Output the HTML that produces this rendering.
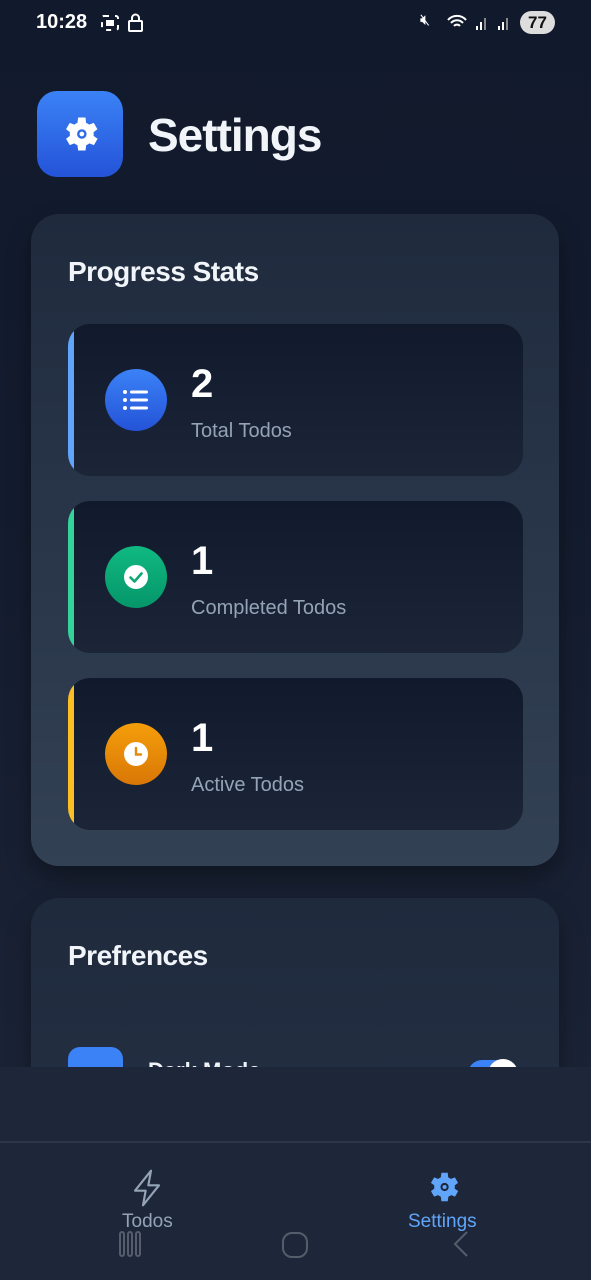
<!DOCTYPE html>
<html><head><style>
*{margin:0;padding:0;box-sizing:border-box}
body{width:591px;height:1280px;overflow:hidden;background:#111a2c;font-family:"Liberation Sans",sans-serif;position:relative;color:#f1f5f9}
.abs{position:absolute}
.clip{position:absolute;left:0;top:0;width:591px;height:1067px;overflow:hidden;background:linear-gradient(#111a2c 0,#131c2e 500px,#1a2335 1067px)}
.card{position:absolute;left:31px;width:528px;border-radius:28px;background:linear-gradient(#1f2a3d,#334155);box-shadow:0 12px 24px rgba(0,0,0,.35)}
.stat{position:absolute;left:68px;width:455px;height:152px;border-radius:22px;background:linear-gradient(#111a2c,#1c2538);overflow:hidden}
.stat .bar{position:absolute;left:0;top:0;bottom:0;width:6px}
.circ{position:absolute;left:37px;top:45px;width:62px;height:62px;border-radius:50%}
.num{position:absolute;left:123px;top:38px;font-size:40px;font-weight:bold;color:#fff}
.lab{position:absolute;left:123px;top:96px;font-size:20px;color:#94a3b8}
</style></head><body>
<div class="clip">
<div class="abs" style="left:36px;top:11px;font-size:20px;font-weight:bold;color:#fff">10:28</div>
<svg class="abs" style="left:100px;top:13px" width="46" height="20"><rect x="2" y="3" width="16" height="14" rx="2" fill="none" stroke="#fff" stroke-width="2" stroke-dasharray="5 6"/><rect x="6" y="7" width="8" height="6" fill="#fff"/><rect x="29" y="8" width="13" height="10" rx="1" fill="none" stroke="#fff" stroke-width="2"/><path d="M32 8V5a3.5 3.5 0 0 1 7 0v3" fill="none" stroke="#fff" stroke-width="2"/></svg>
<div class="abs" style="left:420px;top:12px;font-size:16px;color:#fff">🔇︎</div>
<svg class="abs" style="left:446px;top:12px" width="70" height="20"><path d="M2 8a12 12 0 0 1 18 0M5 11a8 8 0 0 1 12 0M8 14a4 4 0 0 1 6 0" stroke="#fff" stroke-width="2" fill="none"/><rect x="30" y="14" width="2" height="4" fill="#fff"/><rect x="34" y="10" width="2" height="8" fill="#fff"/><rect x="38" y="6" width="2" height="12" fill="#888"/><rect x="52" y="14" width="2" height="4" fill="#fff"/><rect x="56" y="10" width="2" height="8" fill="#fff"/><rect x="60" y="6" width="2" height="12" fill="#888"/></svg>
<div class="abs" style="left:520px;top:11px;width:35px;height:23px;border-radius:12px;background:#ddd;color:#111;font-weight:bold;font-size:17px;text-align:center;line-height:23px">77</div>

<div class="abs" style="left:37px;top:91px;width:86px;height:86px;border-radius:20px;background:linear-gradient(#3b82f6,#2453d8)"></div>
<svg class="abs" style="left:58px;top:112px" width="44" height="44" viewBox="0 0 24 24"><path fill="#fff" d="M19.4 13a7.5 7.5 0 0 0 0-2l2.1-1.6-2-3.5-2.5 1a7 7 0 0 0-1.7-1L15 3h-4l-.4 2.9a7 7 0 0 0-1.7 1l-2.5-1-2 3.5L6.5 11a7.5 7.5 0 0 0 0 2l-2.1 1.6 2 3.5 2.5-1a7 7 0 0 0 1.7 1L11 21h4l.4-2.9a7 7 0 0 0 1.7-1l2.5 1 2-3.5z"/><circle cx="13" cy="12" r="2.6" fill="#2f6ae8"/><circle cx="13" cy="12" r="1.3" fill="#fff"/></svg>
<div class="abs" style="left:148px;top:108px;font-size:46px;font-weight:bold;color:#f1f5f9;letter-spacing:-1px">Settings</div>

<div class="card" style="top:214px;height:652px"></div>
<div class="abs" style="left:68px;top:256px;font-size:28px;font-weight:bold;letter-spacing:-.5px">Progress Stats</div>

<div class="stat" style="top:324px"><div class="bar" style="background:#60a5fa"></div>
<div class="circ" style="background:linear-gradient(#3b82f6,#2453d8)"></div>
<svg class="abs" style="left:53px;top:63px" width="30" height="26"><g fill="#fff"><circle cx="4" cy="5" r="2"/><circle cx="4" cy="13" r="2"/><circle cx="4" cy="21" r="2"/><rect x="9" y="3.5" width="18" height="3" rx="1.5"/><rect x="9" y="11.5" width="18" height="3" rx="1.5"/><rect x="9" y="19.5" width="18" height="3" rx="1.5"/></g></svg>
<div class="num">2</div><div class="lab">Total Todos</div></div>

<div class="stat" style="top:501px"><div class="bar" style="background:#34d399"></div>
<div class="circ" style="background:linear-gradient(#10b981,#059669)"></div>
<svg class="abs" style="left:55px;top:63px" width="26" height="26"><circle cx="13" cy="13" r="12" fill="#fff"/><path d="M7.5 13.5l4 4 7-8" stroke="#10a774" stroke-width="2.6" fill="none" stroke-linecap="round" stroke-linejoin="round"/></svg>
<div class="num">1</div><div class="lab">Completed Todos</div></div>

<div class="stat" style="top:678px"><div class="bar" style="background:#fbbf24"></div>
<div class="circ" style="background:linear-gradient(#f59e0b,#d97706)"></div>
<svg class="abs" style="left:55px;top:63px" width="26" height="26"><circle cx="13" cy="13" r="12" fill="#fff"/><path d="M13 7v6.5h5" stroke="#e38a0a" stroke-width="2.4" fill="none" stroke-linecap="round"/></svg>
<div class="num">1</div><div class="lab">Active Todos</div></div>

<div class="card" style="top:898px;height:400px;background:linear-gradient(#1f2a3d,#263246)"></div>
<div class="abs" style="left:68px;top:940px;font-size:28px;font-weight:bold;letter-spacing:-.5px">Prefrences</div>
<div class="abs" style="left:68px;top:1047px;width:55px;height:55px;border-radius:12px;background:#3b82f6"></div>
<div class="abs" style="left:148px;top:1058px;font-size:22px;font-weight:bold">Dark Mode</div>
<div class="abs" style="left:468px;top:1060px;width:50px;height:28px;border-radius:14px;background:#3b82f6"></div>
<div class="abs" style="left:488px;top:1059px;width:30px;height:30px;border-radius:50%;background:#fff"></div>
</div>
<div class="abs" style="left:0;top:1067px;width:591px;height:213px;background:#1e2739"></div>
<div class="abs" style="left:0;top:1141px;width:591px;height:2px;background:#2d3748"></div>
<svg class="abs" style="left:131px;top:1168px" width="32" height="40" viewBox="0 0 24 30"><path d="M15 2L3 17h8l-2 11 12-15h-8z" fill="none" stroke="#94a3b8" stroke-width="1.6" stroke-linejoin="round"/></svg>
<div class="abs" style="left:122px;top:1211px;font-size:19px;color:#94a3b8">Todos</div>
<svg class="abs" style="left:424px;top:1168px" width="38" height="38" viewBox="0 0 24 24"><path fill="#60a5fa" d="M19.4 13a7.5 7.5 0 0 0 0-2l2.1-1.6-2-3.5-2.5 1a7 7 0 0 0-1.7-1L15 3h-4l-.4 2.9a7 7 0 0 0-1.7 1l-2.5-1-2 3.5L6.5 11a7.5 7.5 0 0 0 0 2l-2.1 1.6 2 3.5 2.5-1a7 7 0 0 0 1.7 1L11 21h4l.4-2.9a7 7 0 0 0 1.7-1l2.5 1 2-3.5z"/><circle cx="13" cy="12" r="2.6" fill="#1e2739"/><circle cx="13" cy="12" r="1.3" fill="#60a5fa"/></svg>
<div class="abs" style="left:408px;top:1211px;font-size:19px;color:#60a5fa">Settings</div>
<svg class="abs" style="left:115px;top:1228px" width="360" height="36"><g fill="none" stroke="#555d6b" stroke-width="2"><rect x="5" y="4" width="4" height="24" rx="2"/><rect x="13" y="4" width="4" height="24" rx="2"/><rect x="21" y="4" width="4" height="24" rx="2"/><rect x="168" y="5" width="24" height="24" rx="9"/><path d="M352 4l-12 12 12 12"/></g></svg>
</body></html>
